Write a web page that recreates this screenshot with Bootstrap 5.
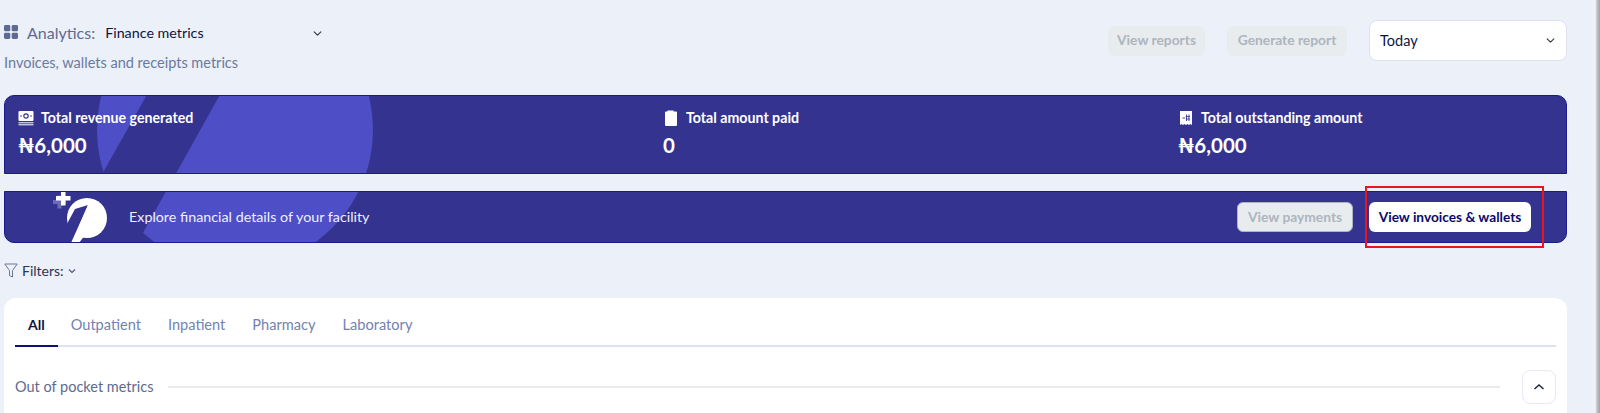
<!DOCTYPE html>
<html lang="en">
<head>
    <meta charset="UTF-8">
    <meta name="viewport" content="width=device-width, initial-scale=1.0">
    <title>Finance metrics</title>
    <link href="https://cdn.jsdelivr.net/npm/bootstrap@5.3.3/dist/css/bootstrap.min.css" rel="stylesheet">
    <style>
        html, body {
            height: 413px;
            overflow: hidden;
        }

        body {
            background-color: #ecf0f9;
            font-family: "Lato", "Liberation Sans", sans-serif;
            color: #0d1440;
        }

        .page-wrap {
            position: relative;
            padding: 20px 33px 0 4px;
        }

        .edge-shade {
            position: absolute;
            top: 0;
            right: 0;
            width: 8px;
            height: 413px;
            background: linear-gradient(90deg, #ecf0f9, #f2f3f8 40%, #c4c6cc 60%, #a0a2a8 100%);
        }

        .top-head {
            height: 75px;
        }

        .head-row {
            padding-top: 1px;
        }

        .head-icon {
            width: 14px;
            height: 14px;
            margin-top: -2px;
        }

        .head-label {
            font-size: 16px;
            color: #5d6b90;
            margin-left: 9px;
        }

        .metric-select {
            width: 232px;
            height: 24px;
            padding: 0 0 0 10px;
            border: 0;
            background-color: transparent;
            background-position: right 5px center;
            background-size: 9px 9px;
            font-size: 14.3px;
            color: #0d1440;
        }

        .head-sub {
            font-size: 14.5px;
            color: #6a7a9e;
            margin-top: 7px;
        }

        .ghost-btn {
            height: 30px;
            padding: 0 9px;
            border: 0;
            border-radius: 6px;
            background-color: #e9ecef;
            color: #adb5bd;
            font-size: 13.8px;
            font-weight: 700;
            white-space: nowrap;
        }

        .ghost-btn:disabled {
            background-color: #e9ecef;
            color: #adb5bd;
            opacity: 1;
        }

        .head-actions {
            gap: 22px;
        }

        .report-btn { width: 97px; }
        .generate-btn { width: 120px; }

        .range-select {
            width: 198px;
            height: 41px;
            padding: 0 0 0 10px;
            border: 1px solid #dde2ee;
            border-radius: 8px;
            background-position: right 11px center;
            background-size: 9px 9px;
            font-size: 14.5px;
            color: #0d1440;
        }

        .promo-panel {
            position: relative;
            overflow: hidden;
            background-color: #343490;
            border: 1px solid #1a1a8c;
            color: #fff;
        }

        .promo-panel > * {
            position: relative;
        }

        .promo-panel > .promo-art {
            position: absolute;
            left: -1px;
            width: 400px;
            height: 160px;
        }

        .stats-panel {
            height: 79px;
            padding: 12px 13px 0;
            border-radius: 10px 10px 0 0;
        }

        .stats-panel .promo-art {
            top: -1px;
        }

        .stat-one { width: 645px; }
        .stat-two { width: 515px; }

        .stat-title {
            font-size: 14.2px;
            font-weight: 700;
            line-height: 20px;
            white-space: nowrap;
        }

        .stat-icon {
            width: 16px;
            height: 16px;
            margin-right: 7px;
        }

        .stat-value {
            font-size: 20.5px;
            font-weight: 700;
            line-height: 30px;
            margin-top: 2px;
        }

        .explore-panel {
            height: 52px;
            margin-top: 17px;
            padding: 0 35px 0 47px;
            border-radius: 0 0 10px 10px;
        }

        .explore-panel .promo-art {
            top: -97px;
        }

        .explore-logo {
            width: 62px;
            height: 52px;
            margin-right: 15px;
            flex-shrink: 0;
        }

        .explore-text {
            font-size: 14.3px;
            color: #eef0ff;
        }

        .invoice-btn {
            height: 30px;
            width: 162px;
            padding: 0;
            border: 0;
            border-radius: 6px;
            background-color: #fff;
            color: #0a0a6b;
            font-size: 13.7px;
            font-weight: 700;
        }

        .payment-btn {
            width: 116px;
            padding: 0;
            border: 1px solid #d3d6de;
        }

        .red-box {
            position: absolute;
            left: 1365px;
            top: 186px;
            width: 179px;
            height: 62px;
            border: 2px solid #e8171f;
            pointer-events: none;
        }

        .filter-row {
            height: 55px;
            font-size: 14px;
            color: #2c3555;
        }

        .tabs-card {
            height: 130px;
            padding: 12px 11px 0;
            background-color: #fff;
            border-radius: 12px;
        }

        .tab-strip {
            border-bottom: 2px solid #dfe3ee;
        }

        .tab-strip .nav-link {
            height: 35px;
            padding: 4px 14px 0 13px;
            font-size: 14.6px;
            color: #7283b0;
        }

        .tab-strip .nav-link.active {
            margin: 0 0 -2px;
            height: 37px;
            padding: 4px 13px 0;
            border-bottom: 2px solid #10107a;
            color: #0d1440;
            font-size: 14px;
            font-weight: 700;
        }

        .section-row {
            margin-top: 23px;
        }

        .section-name {
            font-size: 14.5px;
            color: #5d6b90;
            white-space: nowrap;
        }

        .section-line {
            height: 2px;
            background-color: #e9ebef;
            margin: 0 22px 0 14px;
        }

        .fold-btn {
            width: 34px;
            height: 34px;
            padding: 0;
            border: 1px solid #e6e9f2;
            border-radius: 8px;
            background-color: #fff;
        }
    </style>
</head>
<body>
    <svg width="0" height="0" class="d-block">
        <symbol id="bg-p" viewBox="0 0 400 160">
            <circle cx="231" cy="35" r="138" fill="#4e4ec6"/>
            <polygon points="145,-4 218,-4 131,152 60,152 101,74" fill="#343490"/>
        </symbol>
    </svg>

    <div class="page-wrap">
        <div class="top-head d-flex justify-content-between align-items-start">
            <div>
                <div class="head-row d-flex align-items-center">
                    <svg class="head-icon" viewBox="0 0 14 14" fill="#5d6b90">
                        <rect x="0" y="0" width="6.3" height="6.3" rx="1.4"/>
                        <rect x="7.7" y="0" width="6.3" height="6.3" rx="1.4"/>
                        <rect x="0" y="7.7" width="6.3" height="6.3" rx="1.4"/>
                        <rect x="7.7" y="7.7" width="6.3" height="6.3" rx="1.4"/>
                    </svg>
                    <span class="head-label">Analytics:</span>
                    <select class="form-select metric-select">
                        <option>Finance metrics</option>
                    </select>
                </div>
                <div class="head-sub">Invoices, wallets and receipts metrics</div>
            </div>
            <div class="head-actions d-flex align-items-center">
                <button class="btn ghost-btn report-btn" disabled>View reports</button>
                <button class="btn ghost-btn generate-btn" disabled>Generate report</button>
                <select class="form-select range-select">
                    <option>Today</option>
                </select>
            </div>
        </div>

        <div class="promo-panel stats-panel d-flex">
            <svg class="promo-art"><use href="#bg-p"/></svg>
            <div class="stat-one">
                <div class="stat-title d-flex align-items-center">
                    <svg class="stat-icon" viewBox="0 0 16 16">
                        <rect x="0.5" y="1" width="15" height="10" rx="1" fill="#fff"/>
                        <circle cx="8" cy="6" r="2.2" fill="none" stroke="#343490" stroke-width="1.2"/>
                        <circle cx="3" cy="6" r="0.8" fill="#343490"/>
                        <circle cx="13" cy="6" r="0.8" fill="#343490"/>
                        <path d="M0.5 12.8h15M0.5 14.8h15" stroke="#fff" stroke-width="1"/>
                    </svg>
                    Total revenue generated
                </div>
                <div class="stat-value">₦6,000</div>
            </div>
            <div class="stat-two">
                <div class="stat-title d-flex align-items-center">
                    <svg class="stat-icon" viewBox="0 0 16 16">
                        <path d="M2 2.5a1 1 0 0 1 1-1h1.500v-1h6v1H13a1 1 0 0 1 1 1V15a1 1 0 0 1-1 1H3a1 1 0 0 1-1-1z" fill="#fff"/>
                    </svg>
                    Total amount paid
                </div>
                <div class="stat-value">0</div>
            </div>
            <div>
                <div class="stat-title d-flex align-items-center">
                    <svg class="stat-icon" viewBox="0 0 16 16">
                        <path d="M2 1h12v14l-1.500-1-1.500 1-1.500-1-1.500 1-1.500-1-1.500 1-1.500-1L2 15z" fill="#fff"/>
                        <path d="M4.500 8h2.500M8.500 4.500v6.500M11 4.500v6.500M7.800 6.500h4M7.800 9h4" stroke="#343490" stroke-width="0.900" fill="none"/>
                    </svg>
                    Total outstanding amount
                </div>
                <div class="stat-value">₦6,000</div>
            </div>
        </div>

        <div class="promo-panel explore-panel d-flex align-items-center">
            <svg class="promo-art"><use href="#bg-p"/></svg>
            <svg class="explore-logo" viewBox="0 0 62 52">
                <path d="M1 9h4.500V4.500h4V9H14v4H9.500v4.500h-4V13H1z" fill="#8584c4" opacity="0.7"/>
                <path d="M4 5h5V0h4.500v5h5v4.500h-5v5H9v-5H4z" fill="#fff"/>
                <circle cx="35" cy="27" r="20" fill="#fff"/>
                <polygon points="23,18 36,14 20,52 8,52 16,31" fill="#343490"/>
                <polygon points="36,14 42,32 27,52 19,52" fill="#fff"/>
            </svg>
            <span class="explore-text">Explore financial details of your facility</span>
            <div class="ms-auto d-flex gap-3">
                <button class="btn ghost-btn payment-btn" disabled>View payments</button>
                <button class="btn invoice-btn">View invoices &amp; wallets</button>
            </div>
        </div>

        <div class="filter-row d-flex align-items-center">
            <svg width="14" height="16" viewBox="0 0 14 16" fill="none" stroke="#6a7693" stroke-width="1" class="me-1">
                <path d="M0.8 1h12.400L8.500 7.500v6.500l-3-1.500V7.500z"/>
            </svg>
            <span>Filters:</span>
            <svg width="8" height="6" viewBox="0 0 8 6" fill="none" stroke="#4a5473" stroke-width="1.100" class="ms-1">
                <path d="M1 1.500l3 3 3-3"/>
            </svg>
        </div>

        <div class="tabs-card">
            <ul class="nav tab-strip">
                <li class="nav-item"><a class="nav-link active" href="#">All</a></li>
                <li class="nav-item"><a class="nav-link" href="#">Outpatient</a></li>
                <li class="nav-item"><a class="nav-link" href="#">Inpatient</a></li>
                <li class="nav-item"><a class="nav-link" href="#">Pharmacy</a></li>
                <li class="nav-item"><a class="nav-link" href="#">Laboratory</a></li>
            </ul>
            <div class="section-row d-flex align-items-center">
                <span class="section-name">Out of pocket metrics</span>
                <div class="section-line flex-grow-1"></div>
                <button class="btn fold-btn d-flex align-items-center justify-content-center">
                    <svg width="12" height="8" viewBox="0 0 12 8" fill="none" stroke="#1c2340" stroke-width="1.400">
                        <path d="M1.500 6l4.500-4 4.500 4"/>
                    </svg>
                </button>
            </div>
        </div>

        <div class="red-box"></div>
        <div class="edge-shade"></div>
    </div>

    <script src="https://cdn.jsdelivr.net/npm/bootstrap@5.3.3/dist/js/bootstrap.bundle.min.js"></script>
</body>
</html>
